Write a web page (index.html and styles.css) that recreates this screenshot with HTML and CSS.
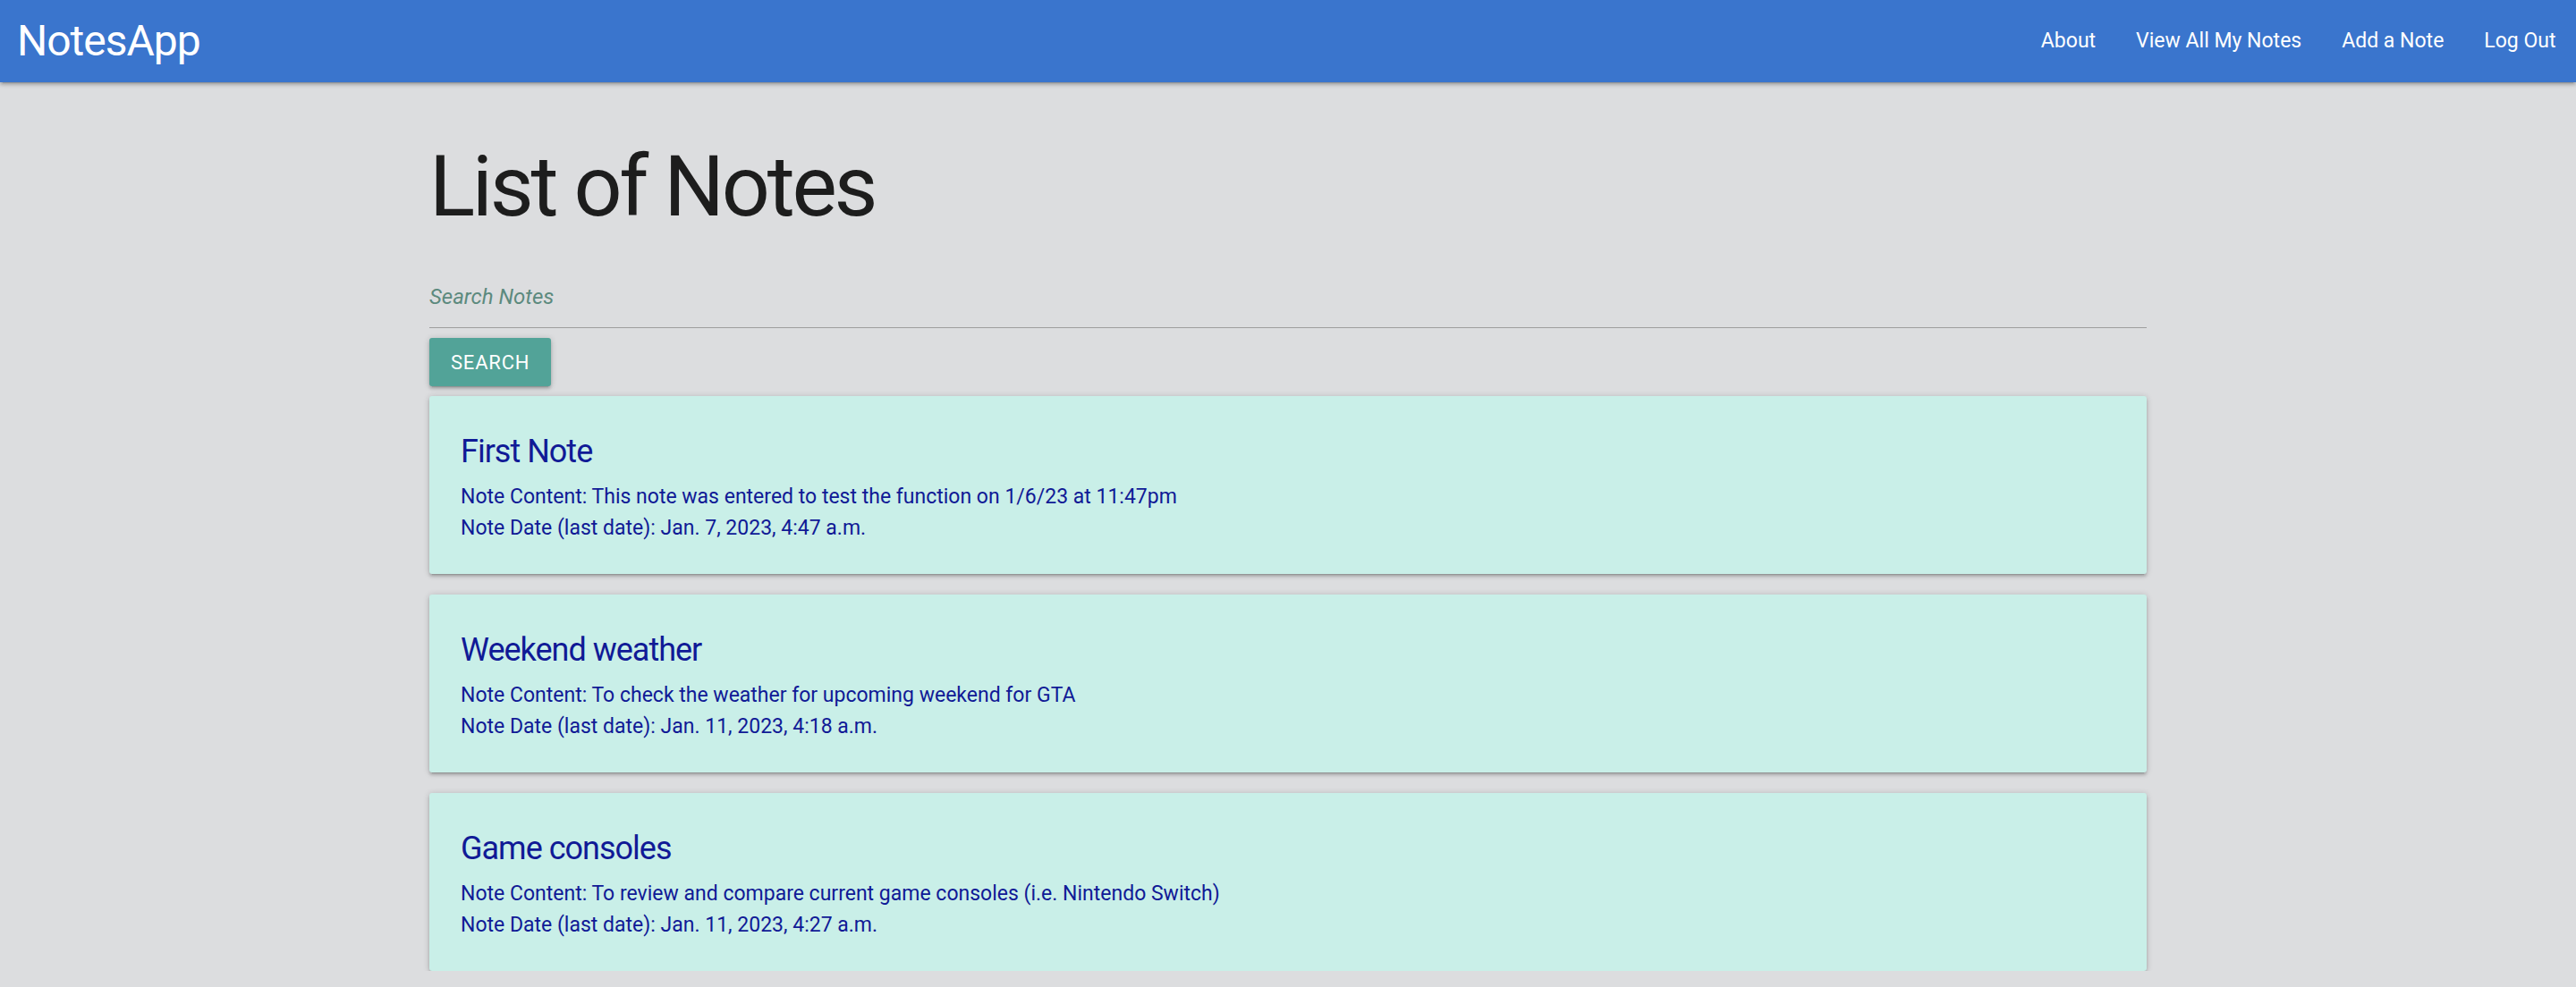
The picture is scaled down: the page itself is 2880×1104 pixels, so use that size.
FILE: index.html
```html
<!DOCTYPE html>
<html lang="en">
<head>
<meta charset="utf-8">
<title>NotesApp</title>
<link rel="stylesheet" href="styles.css">
</head>
<body>
<nav class="navbar">
  <a class="brand" href="#">NotesApp</a>
  <ul class="nav-links">
    <li><a href="#">About</a></li>
    <li><a href="#">View All My Notes</a></li>
    <li><a href="#">Add a Note</a></li>
    <li><a href="#">Log Out</a></li>
  </ul>
</nav>
<main class="container">
  <h1 class="page-title">List of Notes</h1>
  <form class="search-form">
    <input class="search-input" type="text" placeholder="Search Notes">
    <button class="btn" type="button">Search</button>
  </form>
  <div class="note-list">
    <div class="note-card">
      <h2 class="note-title">First Note</h2>
      <p class="note-line">Note Content: This note was entered to test the function on 1/6/23 at 11:47pm</p>
      <p class="note-line">Note Date (last date): Jan. 7, 2023, 4:47 a.m.</p>
    </div>
    <div class="note-card">
      <h2 class="note-title">Weekend weather</h2>
      <p class="note-line">Note Content: To check the weather for upcoming weekend for GTA</p>
      <p class="note-line">Note Date (last date): Jan. 11, 2023, 4:18 a.m.</p>
    </div>
    <div class="note-card">
      <h2 class="note-title">Game consoles</h2>
      <p class="note-line">Note Content: To review and compare current game consoles (i.e. Nintendo Switch)</p>
      <p class="note-line">Note Date (last date): Jan. 11, 2023, 4:27 a.m.</p>
    </div>
  </div>
</main>
</body>
</html>
```

FILE: styles.css
```css
* {
  box-sizing: border-box;
}

html, body {
  margin: 0;
  padding: 0;
}

body {
  background: #dcdddf;
  font-family: Roboto, "Noto Sans", "Liberation Sans", sans-serif;
  color: #1d1d1d;
}

.navbar {
  display: flex;
  justify-content: space-between;
  align-items: center;
  height: 92px;
  background: #3a75cd;
  padding-left: 19px;
  box-shadow: 0 3px 3px 0 rgba(0,0,0,0.14), 0 4px 1px -3px rgba(0,0,0,0.12), 0 1px 7px 0 rgba(0,0,0,0.2);
}

.brand {
  color: #fff;
  text-decoration: none;
  font-size: 48px;
  line-height: 92px;
  letter-spacing: -1px;
}

.nav-links {
  display: flex;
  list-style: none;
  margin: 0;
  padding: 0;
}

.nav-links a {
  display: block;
  padding: 0 22.5px;
  color: #fff;
  text-decoration: none;
  font-size: 23px;
  line-height: 92px;
}

.container {
  width: 1920px;
  margin: 0 auto;
}

.page-title {
  margin: 64px 0 35px;
  font-size: 95px;
  line-height: 106px;
  font-weight: 400;
  letter-spacing: -3.3px;
  color: #1d1d1d;
}

.search-form {
  display: flex;
  flex-direction: column;
  align-items: flex-start;
  margin: 0;
}

.search-input {
  width: 100%;
  height: 70px;
  margin: 0 0 11px;
  padding: 0;
  border: none;
  border-bottom: 1px solid #9e9e9e;
  background: transparent;
  font-family: Roboto, "Noto Sans", sans-serif;
  font-size: 24px;
  color: #1d1d1d;
  outline: none;
}

.search-input::placeholder {
  color: #5c8a7e;
  font-style: italic;
  opacity: 1;
}

.btn {
  height: 54px;
  padding: 0 24px;
  border: none;
  border-radius: 3px;
  background: #52a398;
  color: #fff;
  font-family: Roboto, "Noto Sans", sans-serif;
  font-size: 22px;
  letter-spacing: 0.8px;
  text-transform: uppercase;
  box-shadow: 0 3px 3px 0 rgba(0,0,0,0.14), 0 4px 1px -3px rgba(0,0,0,0.12), 0 1px 7px 0 rgba(0,0,0,0.2);
  cursor: pointer;
}

.note-list {
  display: flex;
  flex-direction: column;
  gap: 23px;
  margin-top: 11px;
}

.note-card {
  background: #c9efe8;
  border-radius: 3px;
  padding: 39px 35px 34px;
  color: #101a96;
  box-shadow: 0 3px 3px 0 rgba(0,0,0,0.14), 0 4px 1px -3px rgba(0,0,0,0.12), 0 1px 7px 0 rgba(0,0,0,0.2);
}

.note-title {
  margin: 0 0 11px;
  font-size: 36px;
  line-height: 46px;
  font-weight: 400;
  letter-spacing: -1px;
}

.note-line {
  margin: 0;
  font-size: 23px;
  line-height: 34.5px;
}
```
